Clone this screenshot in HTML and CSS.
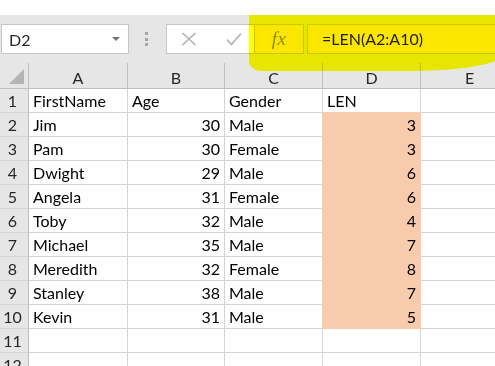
FILE: index.html
```html
<!DOCTYPE html>
<html lang="en">
<head>
  <meta charset="UTF-8">
  <meta name="viewport" content="width=device-width, initial-scale=1.0">
  <title>LEN formula</title>
  <link rel="stylesheet" href="styles.css">
</head>
<body>
  <div class="app">
    <div class="ribbon-edge"></div>

    <div class="formula-bar">
      <div class="name-box">
        <span>D2</span>
        <span class="caret"></span>
      </div>
      <div class="grip"><i></i><i></i><i></i></div>
      <div class="edit-buttons">
        <svg class="icon-cancel" width="16" height="14" viewBox="0 0 16 14">
          <path d="M1.5 1 L14.5 13 M14.5 1 L1.5 13" />
        </svg>
        <svg class="icon-enter" width="16" height="14" viewBox="0 0 16 14">
          <path d="M1 7.5 L5.5 12.5 L15 1.5" />
        </svg>
      </div>
      <div class="fx-box"><span class="fx">fx</span></div>
      <div class="formula-input">=LEN(A2:A10)</div>
    </div>

    <div class="highlight"></div>

    <div class="sheet">
      <div class="corner">
        <svg width="16" height="16" viewBox="0 0 16 16"><path d="M15 0 L15 15 L0 15 Z" /></svg>
      </div>
      <div class="col-head">A</div>
      <div class="col-head">B</div>
      <div class="col-head">C</div>
      <div class="col-head">D</div>
      <div class="col-head">E</div>

      <div class="row-head">1</div>
      <div class="cell">FirstName</div>
      <div class="cell">Age</div>
      <div class="cell">Gender</div>
      <div class="cell">LEN</div>
      <div class="cell"></div>

      <div class="row-head">2</div>
      <div class="cell">Jim</div>
      <div class="cell num">30</div>
      <div class="cell">Male</div>
      <div class="cell num fill">3</div>
      <div class="cell"></div>

      <div class="row-head">3</div>
      <div class="cell">Pam</div>
      <div class="cell num">30</div>
      <div class="cell">Female</div>
      <div class="cell num fill">3</div>
      <div class="cell"></div>

      <div class="row-head">4</div>
      <div class="cell">Dwight</div>
      <div class="cell num">29</div>
      <div class="cell">Male</div>
      <div class="cell num fill">6</div>
      <div class="cell"></div>

      <div class="row-head">5</div>
      <div class="cell">Angela</div>
      <div class="cell num">31</div>
      <div class="cell">Female</div>
      <div class="cell num fill">6</div>
      <div class="cell"></div>

      <div class="row-head">6</div>
      <div class="cell">Toby</div>
      <div class="cell num">32</div>
      <div class="cell">Male</div>
      <div class="cell num fill">4</div>
      <div class="cell"></div>

      <div class="row-head">7</div>
      <div class="cell">Michael</div>
      <div class="cell num">35</div>
      <div class="cell">Male</div>
      <div class="cell num fill">7</div>
      <div class="cell"></div>

      <div class="row-head">8</div>
      <div class="cell">Meredith</div>
      <div class="cell num">32</div>
      <div class="cell">Female</div>
      <div class="cell num fill">8</div>
      <div class="cell"></div>

      <div class="row-head">9</div>
      <div class="cell">Stanley</div>
      <div class="cell num">38</div>
      <div class="cell">Male</div>
      <div class="cell num fill">7</div>
      <div class="cell"></div>

      <div class="row-head">10</div>
      <div class="cell">Kevin</div>
      <div class="cell num">31</div>
      <div class="cell">Male</div>
      <div class="cell num fill">5</div>
      <div class="cell"></div>

      <div class="row-head">11</div>
      <div class="cell"></div>
      <div class="cell"></div>
      <div class="cell"></div>
      <div class="cell"></div>
      <div class="cell"></div>

      <div class="row-head">12</div>
      <div class="cell"></div>
      <div class="cell"></div>
      <div class="cell"></div>
      <div class="cell"></div>
      <div class="cell"></div>
    </div>
  </div>
</body>
</html>
```

FILE: styles.css
```css
html, body {
  margin: 0;
  padding: 0;
  overflow: hidden;
  background-color: #fff;
}

body {
  font-family: Lato, "Open Sans", sans-serif;
  font-size: 16px;
  color: #000;
}

.app {
  position: relative;
  width: 495px;
  height: 366px;
  overflow: hidden;
}

.ribbon-edge {
  height: 15px;
  background-color: #fff;
}

/* formula bar */
.formula-bar {
  display: flex;
  align-items: center;
  height: 48px;
  padding-left: 1px;
  background-color: #e6e6e6;
}

.name-box {
  box-sizing: border-box;
  display: flex;
  align-items: center;
  justify-content: space-between;
  width: 128px;
  height: 30px;
  padding: 0 8px 0 7px;
  background-color: #fff;
  border: 1px solid #c6c6c6;
  color: #262626;
  font-size: 16px;
}

.caret {
  width: 0;
  height: 0;
  border-left: 4px solid transparent;
  border-right: 4px solid transparent;
  border-top: 4px solid #737373;
}

.grip {
  display: flex;
  flex-direction: column;
  gap: 2.5px;
  margin-left: 16px;
}

.grip i {
  display: block;
  width: 3px;
  height: 3px;
  background-color: #a6a6a6;
}

.edit-buttons {
  box-sizing: border-box;
  display: flex;
  align-items: center;
  gap: 29px;
  width: 88px;
  height: 30px;
  margin-left: 18px;
  padding-left: 14px;
  background-color: #fff;
  border: 1px solid #c6c6c6;
  border-right: none;
}

.edit-buttons path {
  fill: none;
  stroke: #b1b1b1;
  stroke-width: 1.6;
}

.fx-box {
  box-sizing: border-box;
  display: flex;
  align-items: center;
  justify-content: center;
  width: 50px;
  height: 30px;
  background-color: #fae6c8;
  border: 1px solid #c9c9c9;
}

.fx {
  font-family: "Liberation Serif", serif;
  font-style: italic;
  font-size: 19px;
  color: #8c8c8c;
  letter-spacing: 0.5px;
}

.formula-input {
  box-sizing: border-box;
  flex: 1;
  height: 30px;
  margin-left: 3px;
  margin-right: -4px;
  padding-left: 14px;
  line-height: 28px;
  background-color: #fae6c8;
  border: 1px solid #c9c9c9;
  color: #1f1f1f;
  font-size: 16px;
}

/* highlighter stroke over the formula bar */
.highlight {
  position: absolute;
  left: 249px;
  top: 15px;
  width: 250px;
  height: 56px;
  background-color: #ffff00;
  mix-blend-mode: multiply;
  border-radius: 0 0 95px 12px / 0 0 14px 10px;
  pointer-events: none;
}

/* worksheet grid */
.sheet {
  display: grid;
  grid-template-columns: 29px 99px 97px 98px 98px 98px;
  grid-template-rows: 26px;
  grid-auto-rows: 24px;
}

.sheet > div {
  box-sizing: border-box;
  border-right: 1px solid #d4d4d4;
  border-bottom: 1px solid #d4d4d4;
  white-space: nowrap;
  overflow: hidden;
}

.corner {
  display: flex;
  align-items: flex-end;
  justify-content: flex-end;
  padding: 0 3px 3px 0;
  background-color: #e6e6e6;
}

.sheet > .corner,
.sheet > .col-head {
  border-right-color: #bfbfbf;
  border-bottom-color: #bfbfbf;
}

.corner path {
  fill: #b4b4b4;
}

.col-head {
  padding-top: 4px;
  line-height: 22px;
  text-align: center;
  background-color: #e6e6e6;
  color: #262626;
}

.row-head {
  padding-right: 3px;
  line-height: 24px;
  text-align: center;
  background-color: #e6e6e6;
  color: #262626;
}

.sheet > .row-head {
  border-right-color: #bfbfbf;
}

.cell {
  padding: 0 4px;
  line-height: 24px;
}

.cell.num {
  text-align: right;
}

.sheet > .fill {
  margin-top: -1px;
  margin-left: -1px;
  background-color: #f8cbad;
  border-right-color: #f8cbad;
  border-bottom-color: #f8cbad;
  line-height: 25px;
}
```
